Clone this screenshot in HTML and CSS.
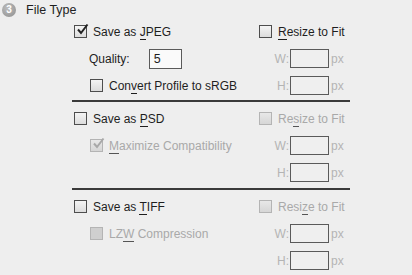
FILE: index.html
```html
<!DOCTYPE html>
<html>
<head>
<meta charset="utf-8">
<link rel="stylesheet" href="styles.css">
</head>
<body>
<div class="panel">
  <div class="header">
    <span class="step">3</span>
    <span class="title">File Type</span>
  </div>
  <div class="content">
    <section class="sec">
      <div class="cell left">
        <span class="cb on"><svg viewBox="0 0 14 14" width="14" height="14"><path d="M3 6.5 L6 10 L12.5 1.5" fill="none" stroke="#222" stroke-width="2"/></svg></span>
        <span class="lbl">Save as <u>J</u>PEG</span>
      </div>
      <div class="cell right">
        <span class="cb"></span>
        <span class="lbl"><u>R</u>esize to Fit</span>
      </div>
      <div class="cell left sub1">
        <span class="lbl">Quality:</span>
        <span class="box q">5</span>
      </div>
      <div class="cell right">
        <span class="dim-l">W:</span><span class="box"></span><span class="dim">px</span>
      </div>
      <div class="cell left sub2">
        <span class="cb"></span>
        <span class="lbl">Con<u>v</u>ert Profile to sRGB</span>
      </div>
      <div class="cell right">
        <span class="dim-l">H:</span><span class="box"></span><span class="dim">px</span>
      </div>
    </section>
    <section class="sec">
      <div class="cell left">
        <span class="cb"></span>
        <span class="lbl">Save as <u>P</u>SD</span>
      </div>
      <div class="cell right">
        <span class="cb dis"></span>
        <span class="lbl off">Re<u>s</u>ize to Fit</span>
      </div>
      <div class="cell left sub2">
        <span class="cb dis"><svg viewBox="0 0 14 14" width="14" height="14"><path d="M3 6.5 L6 10 L12.5 1.5" fill="none" stroke="#a8a8a8" stroke-width="2"/></svg></span>
        <span class="lbl off"><u>M</u>aximize Compatibility</span>
      </div>
      <div class="cell right">
        <span class="dim-l">W:</span><span class="box"></span><span class="dim">px</span>
      </div>
      <div class="cell left"></div>
      <div class="cell right">
        <span class="dim-l">H:</span><span class="box"></span><span class="dim">px</span>
      </div>
    </section>
    <section class="sec">
      <div class="cell left">
        <span class="cb"></span>
        <span class="lbl">Save as <u>T</u>IFF</span>
      </div>
      <div class="cell right">
        <span class="cb dis"></span>
        <span class="lbl off">Resi<u>z</u>e to Fit</span>
      </div>
      <div class="cell left sub2">
        <span class="cb dis fill"></span>
        <span class="lbl off">LZ<u>W</u> Compression</span>
      </div>
      <div class="cell right">
        <span class="dim-l">W:</span><span class="box"></span><span class="dim">px</span>
      </div>
      <div class="cell left"></div>
      <div class="cell right">
        <span class="dim-l">H:</span><span class="box"></span><span class="dim">px</span>
      </div>
    </section>
  </div>
</div>
</body>
</html>
```
FILE: styles.css
```css
html, body {
  margin: 0;
  padding: 0;
  background: #eeeeee;
}
body {
  font-family: "Liberation Sans", Arial, sans-serif;
  font-size: 12px;
  color: #1e1e1e;
  width: 412px;
  height: 275px;
  overflow: hidden;
}
.panel {
  padding-top: 2px;
}
.header {
  display: flex;
  align-items: center;
  height: 15px;
  padding-left: 2px;
}
.step {
  width: 14px;
  height: 14px;
  border-radius: 50%;
  background: radial-gradient(circle at 40% 35%, #bdbdbd, #8e8e8e);
  color: #fff;
  font-size: 10px;
  font-weight: bold;
  line-height: 14px;
  text-align: center;
}
.title {
  margin-left: 10px;
  font-size: 12.5px;
}
.content {
  margin-left: 72px;
  width: 278px;
  padding-top: 1px;
}
.sec {
  display: grid;
  grid-template-columns: 187px 91px;
  grid-auto-rows: 27px;
  border-bottom: 2px solid #3a3a3a;
  padding: 0 0 1px 0;
}
.sec + .sec {
  padding-top: 3px;
  padding-bottom: 2px;
}
.sec:last-child {
  border-bottom: none;
}
.cell {
  display: flex;
  align-items: center;
}
.left {
  padding-left: 2px;
}
.sub1 {
  padding-left: 17px;
}
.sub2 {
  padding-left: 18px;
}
.cb {
  position: relative;
  width: 11px;
  height: 11px;
  border: 1px solid #4d4d4d;
  background: linear-gradient(#f4f4f4, #dcdcdc);
  flex: none;
}
.cb svg {
  position: absolute;
  left: 0;
  top: -3px;
}
.cb.dis {
  border-color: #b4b4b4;
  background: linear-gradient(#e8e8e8, #d6d6d6);
}
.cb.fill {
  background: #cfcfcf;
}
.lbl {
  margin-left: 6px;
  white-space: nowrap;
}
.sub1 .lbl {
  margin-left: 0;
}
.lbl.off {
  color: #a9a9a9;
}
u {
  text-decoration: none;
  border-bottom: 1px solid #1e1e1e;
}
.off u {
  border-bottom-color: #555;
}
.box {
  display: block;
  width: 37px;
  height: 17px;
  border: 1px solid #5a5a5a;
  background: #efefef;
  box-sizing: content-box;
}
.box.q {
  width: 27px;
  height: 18px;
  margin-left: 19px;
  background: #fafafa;
  padding-left: 4px;
  line-height: 18px;
  font-size: 12.5px;
}
.dim-l {
  width: 30px;
  text-align: right;
  padding-right: 1px;
  color: #b4b4b4;
}
.dim {
  margin-left: 2px;
  color: #b4b4b4;
}
```
